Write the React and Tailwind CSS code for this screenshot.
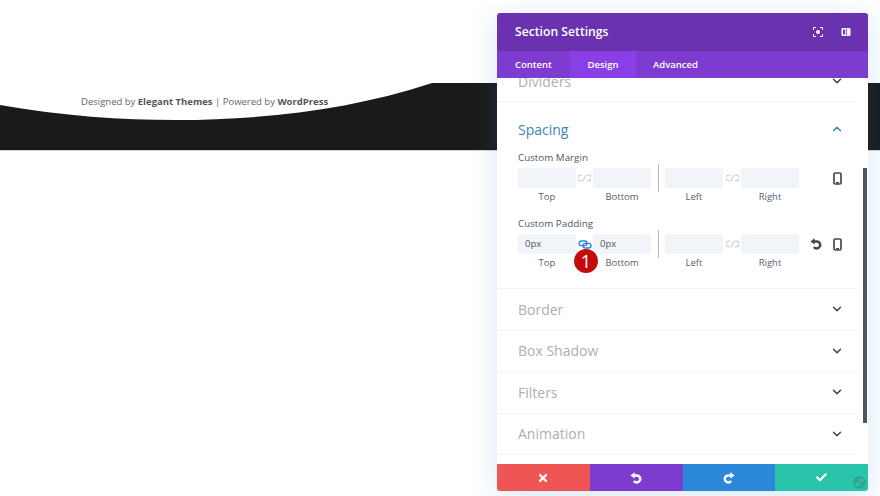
import { ChevronDown, ChevronUp, Check, X } from "lucide-react";

const FONT = { fontFamily: '"Open Sans", sans-serif' };

function MobileIcon() {
  return (
    <svg width="9" height="13" viewBox="0 0 9 13" fill="none">
      <rect x="1" y="1" width="7" height="11" rx="1.2" stroke="#3f4a54" strokeWidth="1.7" />
      <rect x="3" y="10" width="3" height="1.4" fill="#3f4a54" />
    </svg>
  );
}

function UndoIcon({ color = "#3f4a54", className = "" }) {
  return (
    <svg className={className} width="12" height="12" viewBox="0 0 12 12" fill="none">
      <path d="M3.2 3.4H6.8a3.5 3.5 0 1 1-2.9 5.6" stroke={color} strokeWidth="2.5" />
      <path d="M0.4 3.4 4.6 0.2v6.4z" fill={color} />
    </svg>
  );
}

function LinkIcon({ active }) {
  const color = active ? "#2b87da" : "#c3ccd6";
  if (active) {
    return (
      <svg width="14" height="9" viewBox="0 0 14 9" fill="none">
        <rect x="1" y="1" width="8" height="4.6" rx="2.3" stroke={color} strokeWidth="1.4" />
        <rect x="5" y="3.4" width="8" height="4.6" rx="2.3" stroke={color} strokeWidth="1.4" />
      </svg>
    );
  }
  return (
    <svg width="13" height="8" viewBox="0 0 13 8" fill="none">
      <path d="M4 1H2.8a2.3 2.3 0 0 0-.3 5.6L4 7M9 1h1.2a2.3 2.3 0 0 1 .3 5.6L9 7M5.2 7 7.8 1" stroke={color} strokeWidth="1.1" />
    </svg>
  );
}

function SpacingInput({ value }) {
  return (
    <div className="flex h-[20px] w-[58px] items-center bg-[#f1f5f9] pl-[7px] text-[9.5px] text-[#4c5866]">
      {value}
    </div>
  );
}

function SpacingGroup({ label, top, bottom, active, reset }) {
  return (
    <div>
      <div className="text-[9.8px] leading-[14px] font-medium text-[#4c5866]">{label}</div>
      <div className="mt-[3px] flex items-start">
        <div>
          <div className="flex items-center">
            <SpacingInput value={top} />
            <div className="flex w-[17px] justify-center">
              <LinkIcon active={active} />
            </div>
            <SpacingInput value={bottom} />
          </div>
          <div className="mt-[2px] flex text-center text-[9.5px] leading-[14px] text-[#56616d]">
            <div className="w-[58px]">Top</div>
            <div className="ml-[17px] w-[58px]">Bottom</div>
          </div>
        </div>
        <div className="mx-[6.5px] -mt-[4px] h-[28px] w-px bg-[#b5bcc4]" />
        <div>
          <div className="flex items-center">
            <SpacingInput />
            <div className="flex w-[18px] justify-center">
              <LinkIcon />
            </div>
            <SpacingInput />
          </div>
          <div className="mt-[2px] flex text-center text-[9.5px] leading-[14px] text-[#56616d]">
            <div className="w-[58px]">Left</div>
            <div className="ml-[18px] w-[58px]">Right</div>
          </div>
        </div>
        <div className="ml-[11px] flex h-[20px] w-[12px] items-center justify-center">
          {reset && <UndoIcon />}
        </div>
        <div className="ml-[10.5px] flex h-[20px] w-[9px] items-center justify-center">
          <MobileIcon />
        </div>
      </div>
    </div>
  );
}

function CollapsedRow({ title, className = "" }) {
  return (
    <div className={`mr-[10px] flex h-[41.5px] shrink-0 items-center justify-between border-b border-[#f3f4f6] pr-[14px] pl-[21px] ${className}`}>
      <span className="text-[14px] text-[#a9b0b8]">{title}</span>
      <ChevronDown size={14} strokeWidth={2.4} color="#333b44" />
    </div>
  );
}

export default function App() {
  return (
    <div className="relative h-[496px] w-[880px] overflow-hidden bg-white" style={FONT}>
      <div className="h-[83px]" />
      <div className="relative h-[68px] border-b border-[#d4d4d4] bg-[#1a1a1a]">
        {/* curved divider */}
        <svg className="absolute top-0 left-0" width="500" height="67" viewBox="0 0 500 67">
          <path d="M0 0V22C62 33 122 37 176 37C262 37 350 27 432 0Z" fill="#fff" />
        </svg>
        <p className="absolute top-[11px] left-[81px] text-[9.5px] leading-[15px] whitespace-nowrap text-[#666]">
          Designed by <b className="font-bold text-[#555]">Elegant Themes</b> | Powered by{" "}
          <b className="font-bold text-[#555]">WordPress</b>
        </p>
      </div>

      {/* settings window */}
      <div className="absolute top-[13px] left-[497px] flex h-[478px] w-[371px] flex-col overflow-hidden rounded-[3px] bg-white shadow-[0_5px_30px_rgba(43,135,218,0.2)]">
        <div className="z-10 flex h-[38px] shrink-0 items-center justify-between bg-[#6a32ae] pr-[17px] pl-[18px] text-white">
          <span className="pt-px text-[12.2px] font-semibold">Section Settings</span>
          <div className="flex items-center gap-[18px]">
            <svg width="10" height="10" viewBox="0 0 10 10" fill="none" stroke="#fff" strokeWidth="1">
              <path d="M0.5 3V0.5H3M7 0.5H9.5V3M9.5 7V9.5H7M3 9.5H0.5V7" />
              <circle cx="5" cy="5" r="2" fill="#fff" stroke="none" />
            </svg>
            <svg width="10" height="10" viewBox="0 0 10 10">
              <rect x="0.5" y="1" width="9" height="8" rx="1" fill="#fff" />
              <rect x="2" y="2.5" width="2" height="5" fill="#6a32ae" />
              <rect x="5" y="1.5" width="0.8" height="7" fill="#6a32ae" />
            </svg>
          </div>
        </div>
        <div className="z-10 flex h-[27px] shrink-0 bg-[#7d3bcf] pt-px text-[9.5px] font-semibold text-white">
          <div className="flex w-[73px] items-center pl-[18px]">Content</div>
          <div className="-mt-px flex w-[66px] items-center justify-center bg-[#8a3fe6] pt-px">Design</div>
          <div className="flex items-center pl-[17px]">Advanced</div>
        </div>

        <div className="relative flex min-h-0 flex-1 flex-col overflow-hidden">
          <CollapsedRow title="Dividers" className="-mt-[17px] h-[41px]" />
          <div className="mr-[10px] flex h-[187px] shrink-0 flex-col border-b border-[#f3f4f6] pl-[21px]">
            <div className="mt-[12px] flex h-[30px] items-center justify-between pr-[14px]">
              <span className="text-[14px] text-[#3a87b5]">Spacing</span>
              <ChevronUp size={14} strokeWidth={2.4} color="#3a87b5" />
            </div>
            <div className="mt-[7px] flex flex-col gap-[13px]">
              <SpacingGroup label="Custom Margin" />
              <SpacingGroup label="Custom Padding" top="0px" bottom="0px" active reset />
            </div>
          </div>
          <CollapsedRow title="Border" />
          <CollapsedRow title="Box Shadow" />
          <CollapsedRow title="Filters" />
          <CollapsedRow title="Animation" />
          <div className="absolute top-[90px] right-[1px] h-[255px] w-[4px] bg-[#4b5763]" />
        </div>

        <div className="relative flex h-[27px] shrink-0 text-white">
          <div className="flex flex-1 items-center justify-center bg-[#ef5555]">
            <X size={12} strokeWidth={4.5} />
          </div>
          <div className="flex flex-1 items-center justify-center bg-[#7e3bd0]">
            <UndoIcon color="#fff" />
          </div>
          <div className="flex flex-1 items-center justify-center bg-[#2b87da]">
            <UndoIcon color="#fff" className="-scale-x-100" />
          </div>
          <div className="flex flex-1 items-center justify-center bg-[#29c4a9]">
            <Check size={13} strokeWidth={4} />
          </div>
          <div className="absolute right-[2px] bottom-[2px] flex h-[13px] w-[13px] items-center justify-center rounded-full bg-[#2aa995]">
            <svg width="7" height="7" viewBox="0 0 7 7" fill="none" stroke="#5cc4b4" strokeWidth="0.8">
              <path d="M0.5 6.5 6.5 0.5M0.5 4V6.5H3M4 0.5H6.5V3" />
            </svg>
          </div>
        </div>
      </div>

      {/* step badge */}
      <div className="absolute top-[249px] left-[574px] flex h-[24px] w-[24px] items-center justify-center rounded-full bg-[#c40a0a] text-[19px] font-medium text-white">
        1
      </div>
    </div>
  );
}
